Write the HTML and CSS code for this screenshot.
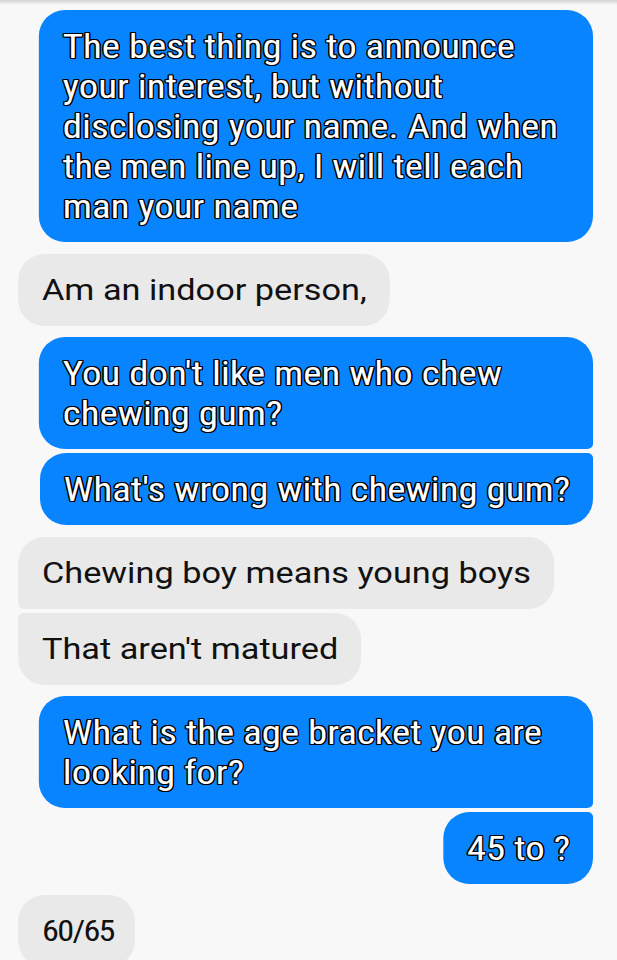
FILE: index.html
```html
<!DOCTYPE html>
<html>
<head>
<meta charset="utf-8">
<link rel="stylesheet" href="styles.css">
</head>
<body>
<div class="topshade"></div>
<main class="chat">
  <div class="msg out full solo-out">The best thing is to announce<br>your interest, but without<br>disclosing your name. And when<br>the men line up, I will tell each<br>man your name</div>
  <div class="msg in solo-in gap-l">Am an indoor person,</div>
  <div class="msg out full first-out gap">You don't like men who chew<br>chewing gum?</div>
  <div class="msg out last-out tight">What's wrong with chewing gum?</div>
  <div class="msg in first-in gap-l">Chewing boy means young boys</div>
  <div class="msg in last-in tight">That aren't matured</div>
  <div class="msg out full first-out gap">What is the age bracket you are<br>looking for?</div>
  <div class="msg out last-out tight">45 to ?</div>
  <div class="msg in solo-in gap digits">60/65</div>
</main>
</body>
</html>
```
FILE: styles.css
```css
html, body {
  margin: 0;
  padding: 0;
}
body {
  background: #f8f8f8;
  width: 617px;
  height: 960px;
  overflow: hidden;
  position: relative;
}
.topshade {
  position: absolute;
  top: 0;
  left: 0;
  right: 0;
  height: 5px;
  background: linear-gradient(#d2d2d2, rgba(248,248,248,0));
  z-index: 1;
}
/* the screenshot is stretched horizontally (540 -> 617) */
.chat {
  width: 540px;
  box-sizing: border-box;
  display: flex;
  flex-direction: column;
  padding: 10px 21px 0 15.75px;
  transform: scaleX(1.142593);
  transform-origin: 0 0;
}
.msg {
  box-sizing: border-box;
  padding: 16px 20px 16px 21px;
  line-height: 40px;
  border-radius: 23px / 26px;
  white-space: nowrap;
}
.full { width: 485px; }
.gap { margin-top: 11px; }
.gap-l { margin-top: 12px; }
.tight { margin-top: 4px; }
.out {
  align-self: flex-end;
  background: #0984ff;
  color: #fff;
  font-family: "Roboto Condensed", Roboto, "Liberation Sans", sans-serif;
  font-size: 34px;
  text-shadow: 1.2px 0 0 #000, -1.2px 0 0 #000, 0 1.2px 0 #000, 0 -1.2px 0 #000,
               1px 1px 0 #000, -1px -1px 0 #000, 1px -1px 0 #000, -1px 1px 0 #000;
}
.in {
  align-self: flex-start;
  background: #e9e9e9;
  color: #111;
  font-family: Roboto, "Noto Sans", sans-serif;
  font-size: 30px;
}
.digits {
  font-family: "Roboto Condensed", Roboto, sans-serif;
  letter-spacing: -1.5px;
  padding-right: 18px;
}
.first-out { border-bottom-right-radius: 5px; }
.last-out { border-top-right-radius: 5px; }
.first-in { border-bottom-left-radius: 5px; }
.last-in { border-top-left-radius: 5px; }
```
